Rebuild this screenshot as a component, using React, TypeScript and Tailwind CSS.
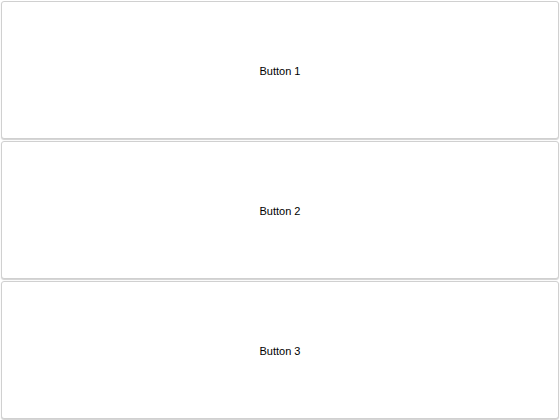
import React from "react";

export default function App() {
  const labels = ["Button 1", "Button 2", "Button 3"];
  return (
    <div className="w-[560px] h-[420px] bg-white flex flex-col" style={{ fontFamily: '"Liberation Sans", Arial, sans-serif' }}>
      {labels.map((l) => (
        <div key={l} className="h-[140px] p-px">
          <button className="w-full h-full flex items-center justify-center pt-[3px] bg-white border border-[#d0d0d0] rounded-[3px] shadow-[0_1px_1px_rgba(0,0,0,0.18)] text-[11px] text-black">
            {l}
          </button>
        </div>
      ))}
    </div>
  );
}
